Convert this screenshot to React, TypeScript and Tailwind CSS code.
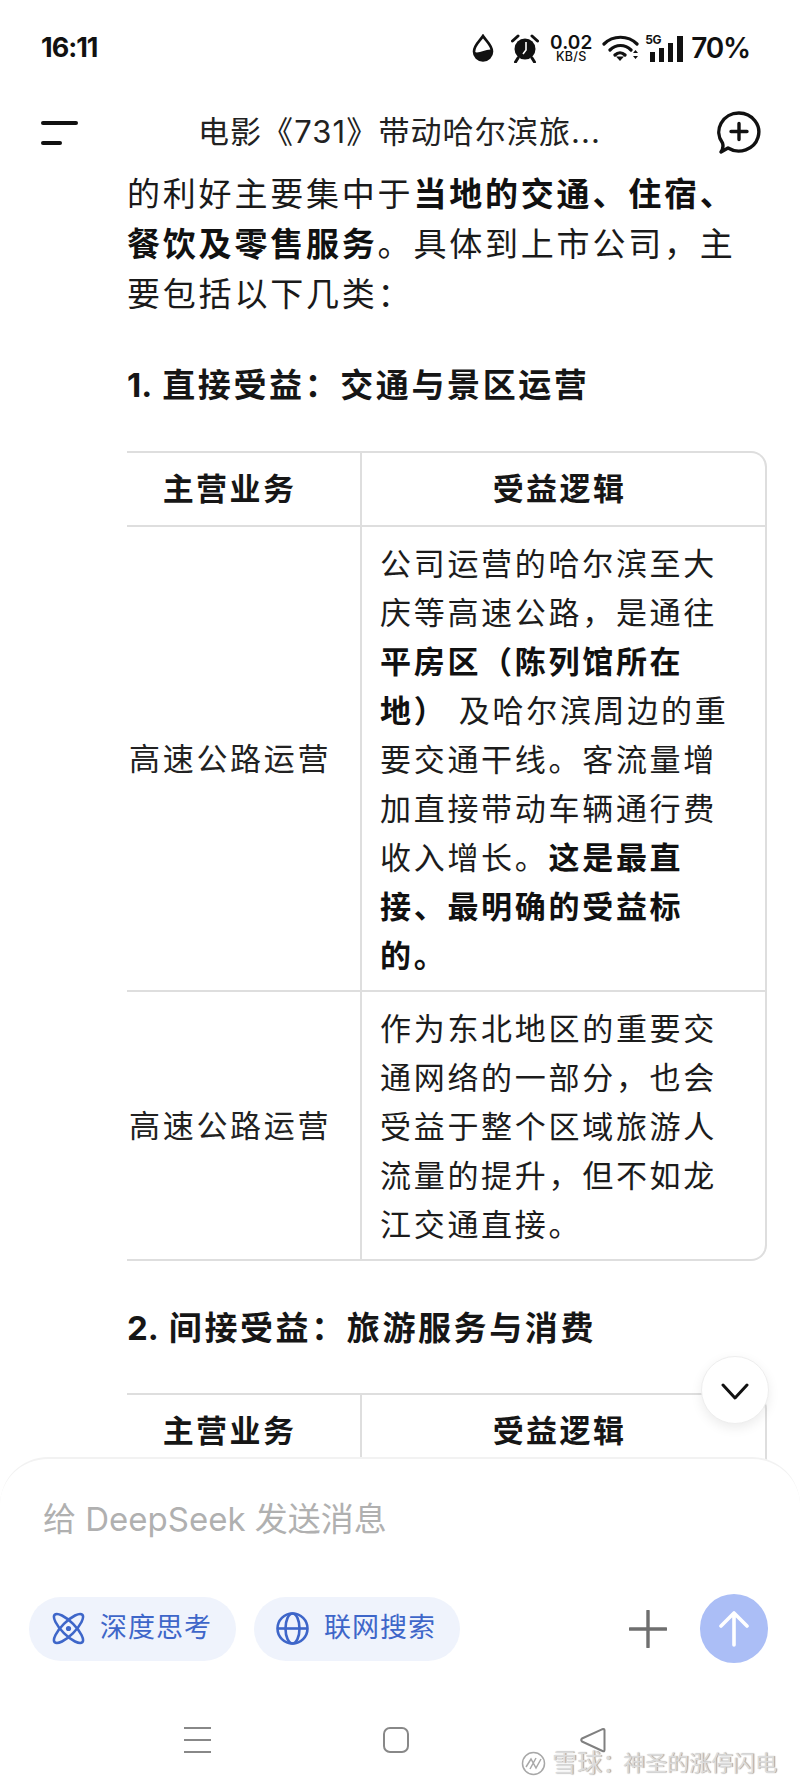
import React from "react";

const Cell = ({ children }: { children: React.ReactNode }) => <span className="block">{children}</span>;

function Row({ left, lines, last }: { left: string; lines: React.ReactNode[]; last?: boolean }) {
  return (
    <div className={`grid grid-cols-[233px_1fr] ${last ? "" : "border-b-2 border-[#dedede]"}`}>
      <div className="flex items-center pl-[2px] text-[31px] tracking-[2.7px] leading-[49px] text-[#222]">{left}</div>
      <div className="border-l-2 border-[#dedede] pl-[18px] pt-[12px] pb-[10px] text-[31px] tracking-[2.7px] leading-[49px] text-[#1c1c1c]">
        {lines.map((l, i) => (
          <Cell key={i}>{l}</Cell>
        ))}
      </div>
    </div>
  );
}

function TableHead() {
  return (
    <div className="grid h-[72px] grid-cols-[233px_1fr] text-[31px] font-bold tracking-[2.4px] text-[#161616]">
      <div className="flex items-center justify-center pr-[28px]">主营业务</div>
      <div className="flex items-center justify-center border-l-2 border-[#dedede] pr-[8px]">受益逻辑</div>
    </div>
  );
}

function Heading({ num, children }: { num: string; children: React.ReactNode }) {
  return (
    <h2 className="text-[33px] font-bold leading-[50px] tracking-[2.6px] text-[#161616]">
      <span className="tracking-[0px]">{num}</span>
      <span className="ml-[10px]">{children}</span>
    </h2>
  );
}

export default function App() {
  return (
    <div className="relative h-[1788px] w-[800px] overflow-hidden bg-white [font-family:'Inter','Noto_Sans_CJK_SC',sans-serif] text-[#1a1a1a]">
      {/* status bar */}
      <div className="flex h-[96px] items-center justify-between pl-[41px] pr-[50px]">
        <span className="text-[27px] font-bold tracking-[-1px] text-[#111]">16:11</span>
        <div className="flex items-center text-[#111]">
          <svg width="22" height="28" viewBox="0 0 22 28" className="mr-[17px]">
            <path d="M11 2 C8 7 2 11 2 17.500 a9 9 0 0 0 18 0 C20 11 14 7 11 2Z" fill="none" stroke="#111" strokeWidth="2.6" />
            <path d="M2.500 18 C7 20 13 15 19.500 15.500 C21 22 16 26 11 26 C6 26 2.500 23 2.500 18Z" fill="#111" />
          </svg>
          <svg width="28" height="29" viewBox="0 0 28 29" className="mr-[10px]">
            <circle cx="14" cy="15" r="10.5" fill="#111" />
            <path d="M15 8 v8 l-3 4" stroke="#fff" strokeWidth="1.6" fill="none" />
            <path d="M1.500 7 L7 2 M26.500 7 L21 2 M7 24 L4.500 28 M21 24 L23.500 28" stroke="#111" strokeWidth="3" strokeLinecap="round" />
          </svg>
          <div className="mr-[9px] flex w-[44px] flex-col items-center pt-[1px]">
            <span className="text-[19px] font-semibold leading-[17px] tracking-[0.2px]">0.02</span>
            <span className="text-[12.5px] font-medium leading-[12px] tracking-[0.3px]">KB/S</span>
          </div>
          <svg width="38" height="27" viewBox="0 0 38 27" className="mr-[10px]">
            <path d="M2 9 C11 0 26 0 35 9 M8 15 C14 9 23 9 29 15 M13 20 C16 17 20 17 23 20" stroke="#111" strokeWidth="3.200" fill="none" strokeLinecap="round" />
            <path d="M18 26 L14 21.5 h8Z" fill="#111" />
            <path d="M31 18 l2.5 -3 l2.5 3Z M31 21 l2.5 3 l2.5 -3Z" fill="#111" />
          </svg>
          <div className="relative mr-[6px] h-[28px] w-[35px]">
            <span className="absolute left-[-5px] top-[0px] text-[12px] font-bold leading-[11px] tracking-[-0.5px]">5G</span>
            <div className="absolute bottom-0 left-0 flex items-end gap-[4px]">
              <div className="h-[10px] w-[5px] bg-[#111]" />
              <div className="h-[14px] w-[5px] bg-[#111]" />
              <div className="h-[19px] w-[5px] bg-[#111]" />
              <div className="h-[26px] w-[6px] bg-[#111]" />
            </div>
          </div>
          <span className="text-[28px] font-semibold tracking-[-1.2px]">70%</span>
        </div>
      </div>

      {/* top bar */}
      <div className="relative flex h-[73px] items-center justify-between pl-[41px] pr-[39px]">
        <div className="flex flex-col gap-[16px]">
          <div className="h-[4px] w-[37px] rounded-full bg-[#111]" />
          <div className="h-[4px] w-[21px] rounded-full bg-[#111]" />
        </div>
        <span className="ml-[4px] text-[31px] tracking-[1.1px] text-[#222]">电影《731》带动哈尔滨旅...</span>
        <svg width="44" height="44" viewBox="0 0 44 44">
          <path d="M22 2 a20 19 0 1 1 -11 35 l-7 4 c2 -3 2.500 -6 1.500 -9 A20 19 0 0 1 22 2Z" fill="none" stroke="#111" strokeWidth="3.4" strokeLinejoin="round" />
          <path d="M22 12.500 v16 M14 20.500 h16" stroke="#111" strokeWidth="3.4" strokeLinecap="round" />
        </svg>
      </div>

      {/* conversation */}
      <div className="pl-[127px] pr-[33px]">
        <div className="text-[33px] leading-[50px] tracking-[2.8px]">
          <div>的利好主要集中于<b className="font-bold text-[#111]">当地的交通、住宿、</b></div>
          <div><b className="font-bold text-[#111]">餐饮及零售服务</b>。具体到上市公司，主</div>
          <div>要包括以下几类：</div>
        </div>

        <div className="mt-[41px]"><Heading num="1.">直接受益：交通与景区运营</Heading></div>

        <div className="mt-[41px] rounded-2xl rounded-l-none border-2 border-l-0 border-[#dedede]">
          <div className="border-b-2 border-[#dedede]"><TableHead /></div>
          <Row
            left="高速公路运营"
            lines={[
              "公司运营的哈尔滨至大",
              "庆等高速公路，是通往",
              <b className="font-bold text-[#111]">平房区（陈列馆所在</b>,
              <span><b className="font-bold text-[#111]">地）</b> 及哈尔滨周边的重</span>,
              "要交通干线。客流量增",
              "加直接带动车辆通行费",
              <span>收入增长。<b className="font-bold text-[#111]">这是最直</b></span>,
              <b className="font-bold text-[#111]">接、最明确的受益标</b>,
              <b className="font-bold text-[#111]">的。</b>,
            ]}
          />
          <Row
            last
            left="高速公路运营"
            lines={["作为东北地区的重要交", "通网络的一部分，也会", "受益于整个区域旅游人", "流量的提升，但不如龙", "江交通直接。"]}
          />
        </div>

        <div className="mt-[42px]"><Heading num="2.">间接受益：旅游服务与消费</Heading></div>

        <div className="mt-[40px] rounded-tr-2xl border-2 border-b-0 border-l-0 border-[#dedede]">
          <TableHead />
        </div>
      </div>

      {/* scroll down */}
      <div className="absolute left-[701px] top-[1356px] flex h-[68px] w-[68px] items-center justify-center rounded-full border border-[#eeeeee] bg-white pt-[4px] shadow-[0_4px_12px_rgba(0,0,0,0.08)]">
        <svg width="28" height="18" viewBox="0 0 28 18">
          <path d="M2 2 L14 15 L26 2" fill="none" stroke="#111" strokeWidth="3" strokeLinecap="round" strokeLinejoin="round" />
        </svg>
      </div>

      {/* composer */}
      <div className="absolute inset-x-0 top-[1457px] bottom-0 rounded-t-[48px] border-t-2 border-[#f2f2f2] bg-white">
        <div className="pl-[43px] pt-[38px] text-[33px] leading-[44px] text-[#b0b0b0]">给 DeepSeek 发送消息</div>
        <div className="mt-[53px] flex items-center pl-[29px] pr-[32px]">
          <div className="flex h-[64px] w-[207px] items-center gap-[15px] rounded-full bg-[#eff3fc] pl-[23px]">
            <svg width="33" height="33" viewBox="0 0 33 33" fill="none" stroke="#3e66c9" strokeWidth="2.600">
              <ellipse cx="16.500" cy="16.500" rx="6.500" ry="19.500" transform="rotate(-45 16.500 16.500)" />
              <ellipse cx="16.500" cy="16.500" rx="6.500" ry="19.500" transform="rotate(45 16.500 16.500)" />
              <circle cx="16.500" cy="16.500" r="2.600" fill="#3e66c9" stroke="none" />
            </svg>
            <span className="text-[27px] tracking-[1px] text-[#3e66c9]">深度思考</span>
          </div>
          <div className="ml-[18px] flex h-[64px] w-[206px] items-center gap-[15px] rounded-full bg-[#eff3fc] pl-[22px]">
            <svg width="33" height="33" viewBox="0 0 33 33" fill="none" stroke="#3e66c9" strokeWidth="2.600">
              <circle cx="16.500" cy="16.500" r="15" />
              <ellipse cx="16.500" cy="16.500" rx="7" ry="15" />
              <path d="M1.500 16.500 H31.500" />
            </svg>
            <span className="text-[27px] tracking-[1px] text-[#3e66c9]">联网搜索</span>
          </div>
          <svg width="38" height="38" viewBox="0 0 38 38" className="ml-auto mr-[33px]">
            <path d="M19 1 V37 M1 19 H37" stroke="#6f6f6f" strokeWidth="3.400" strokeLinecap="round" />
          </svg>
          <div className="flex h-[69px] w-[68px] items-center justify-center rounded-full bg-[#abbef6]">
            <svg width="32" height="36" viewBox="0 0 32 36">
              <path d="M16 34 V3 M3 15 L16 2 L29 15" fill="none" stroke="#fff" strokeWidth="3.600" strokeLinecap="round" strokeLinejoin="round" />
            </svg>
          </div>
        </div>
        {/* nav bar */}
        <div className="mt-[64px] flex items-center pl-[184px]">
          <div className="flex h-[26px] w-[27px] flex-col justify-between">
            <div className="h-[2px] bg-[#888]" />
            <div className="h-[2px] bg-[#888]" />
            <div className="h-[2px] bg-[#888]" />
          </div>
          <div className="ml-[172px] h-[26px] w-[26px] rounded-[7px] border-2 border-[#888]" />
          <svg width="27" height="26" viewBox="0 0 27 26" className="ml-[170px]">
            <path d="M24.500 2 Q25.500 2 25.500 3 V23 Q25.500 25 23.500 24 L3 14.500 Q1.500 13 3 11.500 L23 2.300Z" fill="none" stroke="#808080" strokeWidth="2" strokeLinejoin="round" />
          </svg>
        </div>
      </div>

      {/* watermark */}
      <div className="absolute left-[521px] top-[1749px] flex items-center text-[#dcdcdc] [text-shadow:1px_0_1px_#9a9a9a]">
        <svg width="25" height="25" viewBox="0 0 25 25" fill="none" stroke="#a8a8a8" strokeWidth="1.500" className="mr-[6px]">
          <circle cx="12.500" cy="12.500" r="11" />
          <path d="M5 16 L10 8 L15 17 L20 8 M9 18 L15 7" />
        </svg>
        <span className="text-[25px] leading-[28px]">雪球：</span>
        <span className="ml-[-4px] text-[22px] leading-[28px]">神圣的涨停闪电</span>
      </div>
    </div>
  );
}
